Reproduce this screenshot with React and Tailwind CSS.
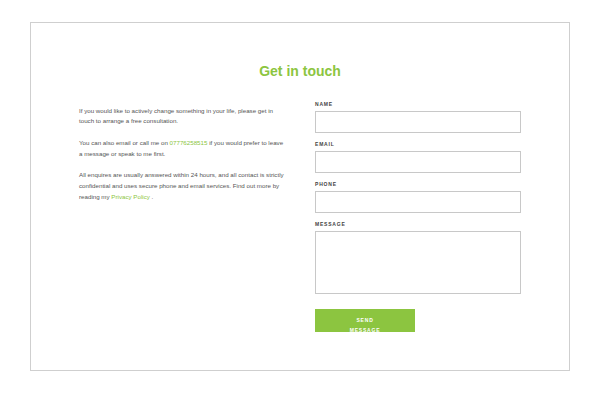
export default function App() {
  const fields = ["Name", "Email", "Phone"];

  return (
    <div className="min-h-[417px] bg-white px-[30px] pt-[22px] font-['Liberation_Sans',Arial,sans-serif]">
      <div className="h-[349px] border border-[#cfcfcf]">
        {/* heading */}
        <h1 className="pt-[38px] text-center text-[14px] font-bold leading-[20px] text-[#8cc540]">
          Get in touch
        </h1>

        <div className="mx-[48px] mt-[20px] grid grid-cols-[210px_206px] gap-x-[26px]">
          {/* intro text */}
          <div className="pt-[4.5px] text-[6.2px] leading-[10.7px] text-[#555]">
            <p className="mb-[11px]">
              If you would like to actively change something in your life, please get in
              <br />
              touch to arrange a free consultation.
            </p>
            <p className="mb-[11px]">
              You can also email or call me on{" "}
              <a className="text-[#8cc540]">07776258515</a> if you would prefer to leave
              <br />
              a message or speak to me first.
            </p>
            <p>
              All enquires are usually answered within 24 hours, and all contact is strictly
              <br />
              confidential and uses secure phone and email services. Find out more by
              <br />
              reading my <a className="text-[#8cc540]">Privacy Policy</a> .
            </p>
          </div>

          {/* form */}
          <form className="flex flex-col">
            {fields.map((f) => (
              <div key={f} className="mb-[8px]">
                <label className="mb-[3px] block text-[5px] font-bold uppercase leading-[7px] tracking-[0.8px] text-[#444]">
                  {f}
                </label>
                <input className="block h-[22px] w-full border border-[#c8c8c8] bg-white" />
              </div>
            ))}
            <div>
              <label className="mb-[3px] block text-[5px] font-bold uppercase leading-[7px] tracking-[0.8px] text-[#444]">
                Message
              </label>
              <textarea className="block h-[63px] w-full resize-none border border-[#c8c8c8] bg-white" />
            </div>
            <button
              type="button"
              className="mt-[15px] h-[23px] w-[100px] overflow-hidden bg-[#8cc540] px-[28px] pt-[6px] text-center text-[5px] font-bold uppercase leading-[10px] tracking-[0.8px] text-white"
            >
              <span className="block">Send Message</span>
            </button>
          </form>
        </div>
      </div>
    </div>
  );
}
